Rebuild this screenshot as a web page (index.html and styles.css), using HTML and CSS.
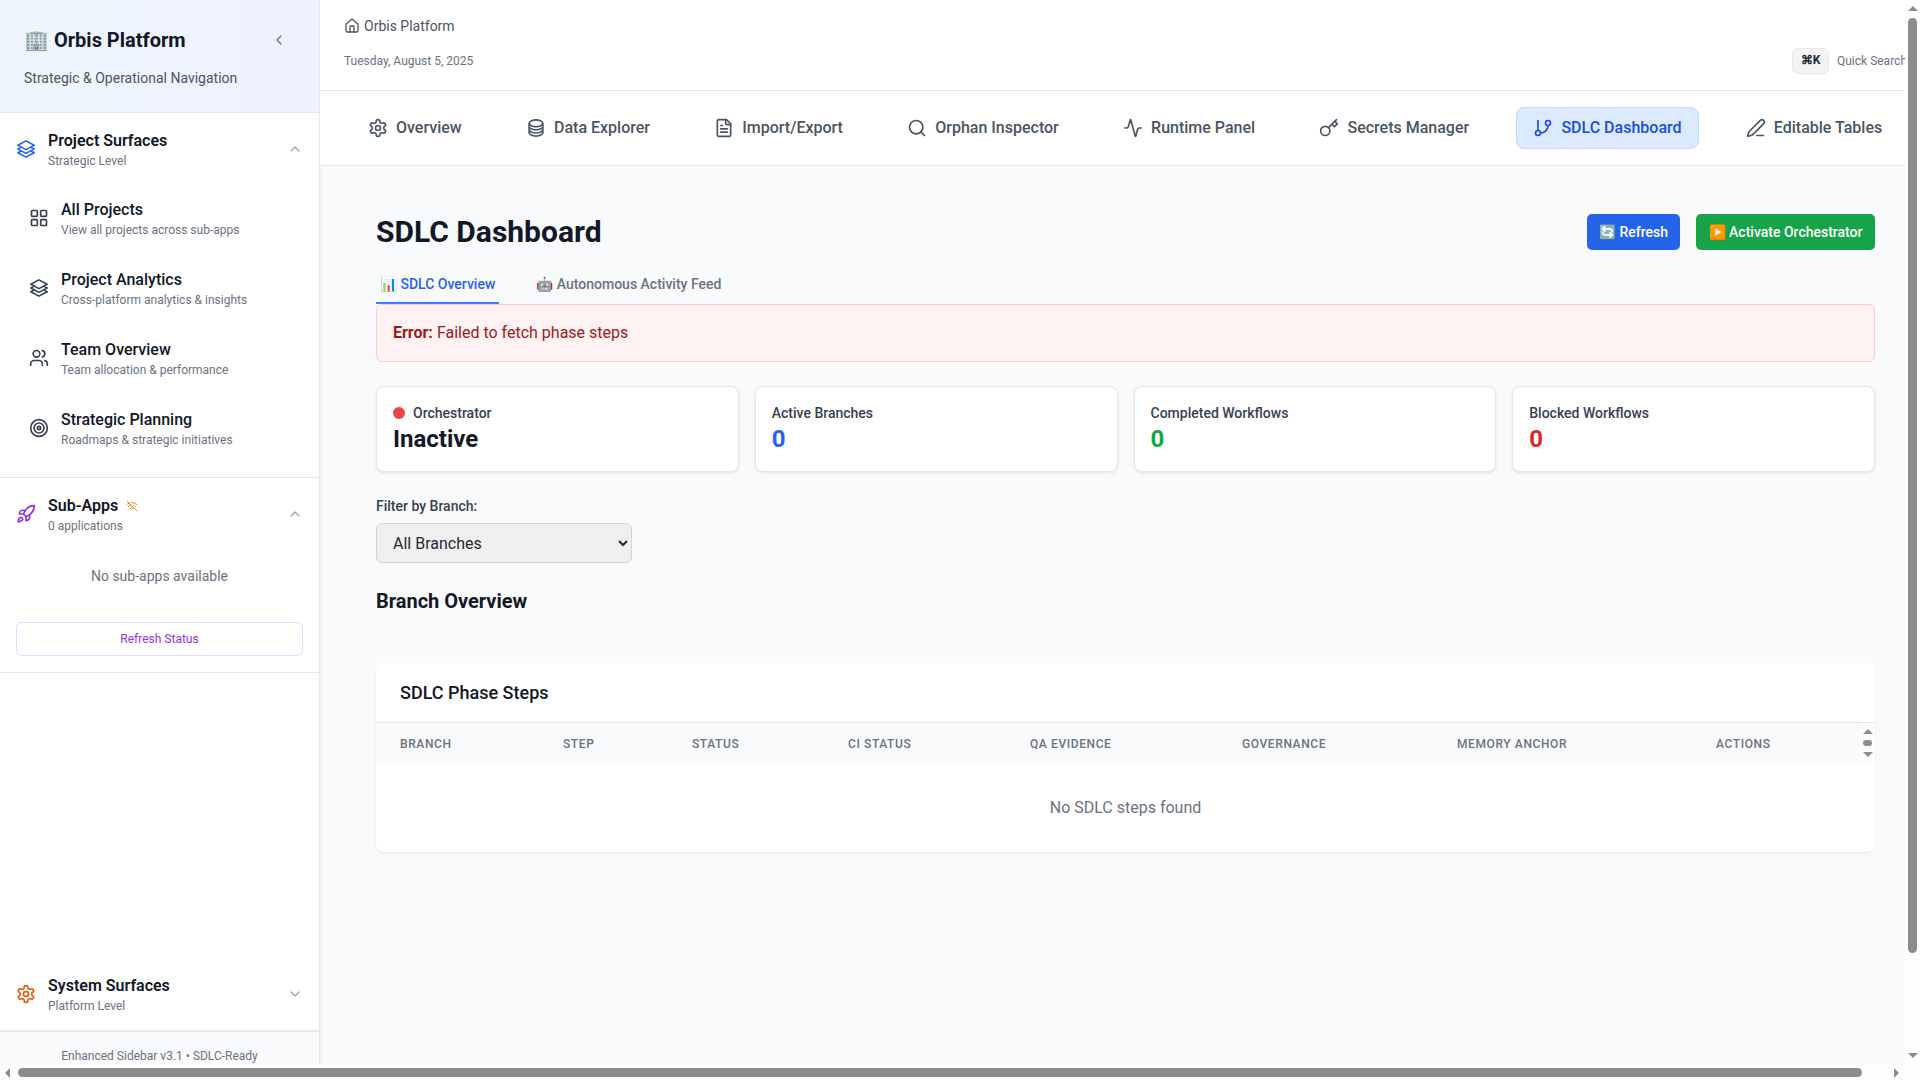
FILE: index.html
```html
<!DOCTYPE html>
<html lang="en">
<head>
  <meta charset="UTF-8">
  <meta name="viewport" content="width=device-width, initial-scale=1.0">
  <title>Orbis Platform - SDLC Dashboard</title>
  <link rel="stylesheet" href="styles.css">
</head>
<body>
  <aside class="sidebar">
    <div class="brand">
      <div class="brand-top">
        <h1 class="brand-title">🏢 Orbis Platform</h1>
        <svg class="icon collapse" viewBox="0 0 24 24" width="16" height="16"><path d="m15 18-6-6 6-6"/></svg>
      </div>
      <p class="brand-sub">Strategic &amp; Operational Navigation</p>
    </div>

    <section class="group group-projects">
      <div class="group-head">
        <svg class="icon blue" viewBox="0 0 24 24" width="20" height="20"><path d="M6.429 9.75 2.25 12l4.179 2.25m0-4.5 5.571 3 5.571-3m-11.142 0L2.25 7.5 12 2.25l9.75 5.25-4.179 2.25m0 0L21.75 12l-4.179 2.25m0 0 4.179 2.25L12 21.75 2.25 16.5l4.179-2.25m11.142 0-5.571 3-5.571-3"/></svg>
        <div class="group-text">
          <div class="group-title">Project Surfaces</div>
          <div class="group-sub">Strategic Level</div>
        </div>
        <svg class="icon chev" viewBox="0 0 24 24" width="16" height="16"><path d="m18 15-6-6-6 6"/></svg>
      </div>
      <a class="nav-item">
        <svg class="icon" viewBox="0 0 24 24" width="20" height="20"><rect x="3" y="3" width="7" height="7" rx="1"/><rect x="14" y="3" width="7" height="7" rx="1"/><rect x="14" y="14" width="7" height="7" rx="1"/><rect x="3" y="14" width="7" height="7" rx="1"/></svg>
        <div><div class="nav-title">All Projects</div><div class="nav-sub">View all projects across sub-apps</div></div>
      </a>
      <a class="nav-item">
        <svg class="icon" viewBox="0 0 24 24" width="20" height="20"><path d="M6.429 9.75 2.25 12l4.179 2.25m0-4.5 5.571 3 5.571-3m-11.142 0L2.25 7.5 12 2.25l9.75 5.25-4.179 2.25m0 0L21.75 12l-4.179 2.25m0 0 4.179 2.25L12 21.75 2.25 16.5l4.179-2.25m11.142 0-5.571 3-5.571-3"/></svg>
        <div><div class="nav-title">Project Analytics</div><div class="nav-sub">Cross-platform analytics &amp; insights</div></div>
      </a>
      <a class="nav-item">
        <svg class="icon" viewBox="0 0 24 24" width="20" height="20"><path d="M16 21v-2a4 4 0 0 0-4-4H6a4 4 0 0 0-4 4v2"/><circle cx="9" cy="7" r="4"/><path d="M22 21v-2a4 4 0 0 0-3-3.87"/><path d="M16 3.13a4 4 0 0 1 0 7.75"/></svg>
        <div><div class="nav-title">Team Overview</div><div class="nav-sub">Team allocation &amp; performance</div></div>
      </a>
      <a class="nav-item">
        <svg class="icon" viewBox="0 0 24 24" width="20" height="20"><circle cx="12" cy="12" r="10"/><circle cx="12" cy="12" r="6"/><circle cx="12" cy="12" r="2"/></svg>
        <div><div class="nav-title">Strategic Planning</div><div class="nav-sub">Roadmaps &amp; strategic initiatives</div></div>
      </a>
    </section>

    <section class="group group-apps">
      <div class="group-head">
        <svg class="icon purple" viewBox="0 0 24 24" width="20" height="20"><path d="M4.5 16.5c-1.5 1.26-2 5-2 5s3.74-.5 5-2c.71-.84.7-2.13-.09-2.91a2.18 2.18 0 0 0-2.91-.09z"/><path d="m12 15-3-3a22 22 0 0 1 2-3.95A12.88 12.88 0 0 1 22 2c0 2.72-.78 7.5-6 11a22.35 22.35 0 0 1-4 2z"/><path d="M9 12H4s.55-3.03 2-4c1.62-1.08 5 0 5 0"/><path d="M12 15v5s3.03-.55 4-2c1.08-1.62 0-5 0-5"/></svg>
        <div class="group-text">
          <div class="group-title">Sub-Apps
            <svg class="icon wifi" viewBox="0 0 24 24" width="12" height="12"><path d="M12 20h.01"/><path d="M8.5 16.429a5 5 0 0 1 7 0"/><path d="M5 12.859a10 10 0 0 1 5.17-2.69"/><path d="M19 12.859a10 10 0 0 0-2.007-1.523"/><path d="M2 8.82a15 15 0 0 1 4.177-2.643"/><path d="M22 8.82a15 15 0 0 0-11.288-3.764"/><path d="m2 2 20 20"/></svg>
          </div>
          <div class="group-sub">0 applications</div>
        </div>
        <svg class="icon chev" viewBox="0 0 24 24" width="16" height="16"><path d="m18 15-6-6-6 6"/></svg>
      </div>
      <p class="empty-apps">No sub-apps available</p>
      <button class="refresh-status">Refresh Status</button>
    </section>

    <section class="group group-system">
      <div class="group-head">
        <svg class="icon red-orange" viewBox="0 0 24 24" width="20" height="20"><path d="M12.22 2h-.44a2 2 0 0 0-2 2v.18a2 2 0 0 1-1 1.73l-.43.25a2 2 0 0 1-2 0l-.15-.08a2 2 0 0 0-2.73.73l-.22.38a2 2 0 0 0 .73 2.73l.15.1a2 2 0 0 1 1 1.72v.51a2 2 0 0 1-1 1.74l-.15.09a2 2 0 0 0-.73 2.73l.22.38a2 2 0 0 0 2.73.73l.15-.08a2 2 0 0 1 2 0l.43.25a2 2 0 0 1 1 1.73V20a2 2 0 0 0 2 2h.44a2 2 0 0 0 2-2v-.18a2 2 0 0 1 1-1.73l.43-.25a2 2 0 0 1 2 0l.15.08a2 2 0 0 0 2.73-.73l.22-.39a2 2 0 0 0-.73-2.73l-.15-.08a2 2 0 0 1-1-1.74v-.5a2 2 0 0 1 1-1.74l.15-.09a2 2 0 0 0 .73-2.73l-.22-.38a2 2 0 0 0-2.73-.73l-.15.08a2 2 0 0 1-2 0l-.43-.25a2 2 0 0 1-1-1.73V4a2 2 0 0 0-2-2z"/><circle cx="12" cy="12" r="3"/></svg>
        <div class="group-text">
          <div class="group-title">System Surfaces</div>
          <div class="group-sub">Platform Level</div>
        </div>
        <svg class="icon chev" viewBox="0 0 24 24" width="16" height="16"><path d="m6 9 6 6 6-6"/></svg>
      </div>
    </section>

    <footer class="side-footer">Enhanced Sidebar v3.1 • SDLC-Ready</footer>
  </aside>

  <div class="main">
    <header class="topbar">
      <div>
        <div class="crumb">
          <svg class="icon" viewBox="0 0 24 24" width="16" height="16"><path d="M15 21v-8a1 1 0 0 0-1-1h-4a1 1 0 0 0-1 1v8"/><path d="M3 10a2 2 0 0 1 .709-1.528l7-5.999a2 2 0 0 1 2.582 0l7 5.999A2 2 0 0 1 21 10v9a2 2 0 0 1-2 2H5a2 2 0 0 1-2-2z"/></svg>
          Orbis Platform
        </div>
        <div class="date">Tuesday, August 5, 2025</div>
      </div>
      <div class="search-hint"><kbd>⌘K</kbd><span>Quick Search</span></div>
    </header>

    <nav class="tabs">
      <a class="tab"><svg class="icon" viewBox="0 0 24 24" width="20" height="20"><path d="M12.22 2h-.44a2 2 0 0 0-2 2v.18a2 2 0 0 1-1 1.73l-.43.25a2 2 0 0 1-2 0l-.15-.08a2 2 0 0 0-2.73.73l-.22.38a2 2 0 0 0 .73 2.73l.15.1a2 2 0 0 1 1 1.72v.51a2 2 0 0 1-1 1.74l-.15.09a2 2 0 0 0-.73 2.73l.22.38a2 2 0 0 0 2.73.73l.15-.08a2 2 0 0 1 2 0l.43.25a2 2 0 0 1 1 1.73V20a2 2 0 0 0 2 2h.44a2 2 0 0 0 2-2v-.18a2 2 0 0 1 1-1.73l.43-.25a2 2 0 0 1 2 0l.15.08a2 2 0 0 0 2.73-.73l.22-.39a2 2 0 0 0-.73-2.73l-.15-.08a2 2 0 0 1-1-1.74v-.5a2 2 0 0 1 1-1.74l.15-.09a2 2 0 0 0 .73-2.73l-.22-.38a2 2 0 0 0-2.73-.73l-.15.08a2 2 0 0 1-2 0l-.43-.25a2 2 0 0 1-1-1.73V4a2 2 0 0 0-2-2z"/><circle cx="12" cy="12" r="3"/></svg>Overview</a>
      <a class="tab"><svg class="icon" viewBox="0 0 24 24" width="20" height="20"><path d="M20.25 6.375c0 2.278-3.694 4.125-8.25 4.125S3.75 8.653 3.75 6.375m16.5 0c0-2.278-3.694-4.125-8.25-4.125S3.75 4.097 3.75 6.375m16.5 0v11.25c0 2.278-3.694 4.125-8.25 4.125s-8.25-1.847-8.25-4.125V6.375m16.5 0v3.75m-16.5-3.75v3.75m16.5 0v3.75C20.25 16.153 16.556 18 12 18s-8.25-1.847-8.25-4.125v-3.75m16.5 0c0 2.278-3.694 4.125-8.25 4.125s-8.25-1.847-8.25-4.125"/></svg>Data Explorer</a>
      <a class="tab"><svg class="icon" viewBox="0 0 24 24" width="20" height="20"><path d="M15 2H6a2 2 0 0 0-2 2v16a2 2 0 0 0 2 2h12a2 2 0 0 0 2-2V7Z"/><path d="M14 2v4a2 2 0 0 0 2 2h4"/><path d="M10 9H8"/><path d="M16 13H8"/><path d="M16 17H8"/></svg>Import/Export</a>
      <a class="tab"><svg class="icon" viewBox="0 0 24 24" width="20" height="20"><circle cx="11" cy="11" r="8"/><path d="m21 21-4.3-4.3"/></svg>Orphan Inspector</a>
      <a class="tab"><svg class="icon" viewBox="0 0 24 24" width="20" height="20"><path d="M22 12h-2.48a2 2 0 0 0-1.93 1.46l-2.35 8.36a.25.25 0 0 1-.48 0L9.24 2.18a.25.25 0 0 0-.48 0l-2.35 8.36A2 2 0 0 1 4.49 12H2"/></svg>Runtime Panel</a>
      <a class="tab"><svg class="icon" viewBox="0 0 24 24" width="20" height="20"><path d="m15.5 7.5 3 3L22 7l-3-3"/><path d="m21 2-9.6 9.6"/><circle cx="7.5" cy="15.5" r="5.5"/></svg>Secrets Manager</a>
      <a class="tab tab-active"><svg class="icon" viewBox="0 0 24 24" width="20" height="20"><path d="M6 3v12"/><circle cx="18" cy="6" r="3"/><circle cx="6" cy="18" r="3"/><path d="M18 9a9 9 0 0 1-9 9"/></svg>SDLC Dashboard</a>
      <a class="tab"><svg class="icon" viewBox="0 0 24 24" width="20" height="20"><path d="M13 21h8"/><path d="M21.174 6.812a1 1 0 0 0-3.986-3.987L3.842 16.174a2 2 0 0 0-.5.83l-1.321 4.352a.5.5 0 0 0 .623.622l4.353-1.32a2 2 0 0 0 .83-.497z"/></svg>Editable Tables</a>
    </nav>

    <main class="content">
      <div class="page-head">
        <h2 class="page-title">SDLC Dashboard</h2>
        <div class="actions">
          <button class="btn btn-blue">🔄 Refresh</button>
          <button class="btn btn-green">▶️ Activate Orchestrator</button>
        </div>
      </div>

      <div class="subtabs">
        <a class="subtab subtab-active">📊 SDLC Overview</a>
        <a class="subtab">🤖 Autonomous Activity Feed</a>
      </div>

      <div class="error-box"><strong>Error:</strong> Failed to fetch phase steps</div>

      <div class="stats">
        <div class="stat">
          <div class="stat-label"><span class="dot"></span>Orchestrator</div>
          <div class="stat-value">Inactive</div>
        </div>
        <div class="stat">
          <div class="stat-label">Active Branches</div>
          <div class="stat-value val-blue">0</div>
        </div>
        <div class="stat">
          <div class="stat-label">Completed Workflows</div>
          <div class="stat-value val-green">0</div>
        </div>
        <div class="stat">
          <div class="stat-label">Blocked Workflows</div>
          <div class="stat-value val-red">0</div>
        </div>
      </div>

      <label class="filter-label" for="branch">Filter by Branch:</label>
      <select class="filter" id="branch">
        <option>All Branches</option>
      </select>

      <h3 class="section-title">Branch Overview</h3>

      <div class="steps-card">
        <h3 class="steps-title">SDLC Phase Steps</h3>
        <div class="steps-head">
          <div class="steps-cols">
            <span>Branch</span>
            <span>Step</span>
            <span>Status</span>
            <span>CI Status</span>
            <span>QA Evidence</span>
            <span>Governance</span>
            <span>Memory Anchor</span>
            <span>Actions</span>
          </div>
          <div class="mini-scroll">
            <span class="arrow arrow-up"></span>
            <span class="mini-thumb"></span>
            <span class="arrow arrow-down"></span>
          </div>
        </div>
        <div class="steps-empty">No SDLC steps found</div>
      </div>
    </main>
  </div>

  <!-- window scrollbars -->
  <div class="vbar">
    <span class="arrow arrow-up"></span>
    <span class="vthumb"></span>
    <span class="arrow arrow-down"></span>
  </div>
  <div class="hbar">
    <span class="arrow arrow-left"></span>
    <span class="hthumb"></span>
    <span class="arrow arrow-right"></span>
  </div>
</body>
</html>
```

FILE: styles.css
```css
html {
  overflow: hidden;
}

body {
  margin: 0;
  width: 1931px;
  height: 100vh;
  overflow: hidden;
  display: flex;
  align-items: flex-start;
  font-family: Roboto, "Noto Sans", sans-serif;
  background-color: #f9fafb;
  color: #111827;
}

.icon {
  fill: none;
  stroke: currentColor;
  stroke-width: 2;
  stroke-linecap: round;
  stroke-linejoin: round;
  flex-shrink: 0;
}

/* sidebar */
.sidebar {
  width: 320px;
  height: 100vh;
  box-sizing: border-box;
  flex-shrink: 0;
  display: flex;
  flex-direction: column;
  background-color: #fff;
  border-right: 1px solid #e5e7eb;
  box-shadow: 1px 0 3px rgba(0, 0, 0, 0.06);
}

.brand {
  height: 113px;
  box-sizing: border-box;
  padding: 24px 24px 0;
  background: linear-gradient(to right, #eff6ff, #eef2ff);
  border-bottom: 1px solid #e5e7eb;
}

.brand-top {
  display: flex;
  align-items: center;
  justify-content: space-between;
  height: 32px;
}

.brand-title {
  margin: 0;
  font-size: 20px;
  font-weight: 700;
}

.collapse {
  color: #6b7280;
  margin-right: 8px;
}

.brand-sub {
  margin: 12px 0 0;
  font-size: 14px;
  line-height: 20px;
  color: #4b5563;
}

.group {
  border-bottom: 1px solid #e5e7eb;
}

.group-projects {
  height: 365px;
  box-sizing: border-box;
}

.group-apps {
  height: 195px;
  box-sizing: border-box;
}

.group-system {
  margin-top: auto;
  height: 80px;
  box-sizing: border-box;
  padding-top: 22px;
  border-bottom-width: 2px;
}

.group-head {
  display: flex;
  align-items: center;
  padding: 16px 16px 0;
}

.group-system .group-head {
  padding-top: 0;
}

.group-head > .icon:first-child {
  margin-right: 12px;
}

.group-head .blue { color: #2563eb; }
.group-head .purple { color: #9333ea; }
.group-head .red-orange { color: #ea580c; }

.group-text {
  flex: 1;
}

.group-title {
  font-size: 16px;
  font-weight: 600;
  line-height: 24px;
  display: flex;
  align-items: center;
  gap: 8px;
}

.wifi {
  color: #ea8a1c;
}

.group-sub {
  font-size: 12px;
  line-height: 16px;
  color: #6b7280;
}

.chev {
  color: #9ca3af;
  margin-top: -1px;
}

.nav-item {
  display: flex;
  align-items: center;
  height: 70px;
  padding: 0 16px 0 29px;
  gap: 12px;
  color: #374151;
}

.group-head + .nav-item {
  margin-top: 14px;
}

.nav-title {
  font-size: 16px;
  font-weight: 500;
  line-height: 24px;
  color: #111827;
}

.nav-sub {
  font-size: 12px;
  line-height: 16px;
  color: #6b7280;
}

.empty-apps {
  margin: 32px 0 0;
  text-align: center;
  font-size: 14px;
  line-height: 20px;
  color: #6b7280;
}

.refresh-status {
  display: block;
  margin: 36px 16px 0;
  width: 287px;
  height: 34px;
  background-color: #fff;
  border: 1px solid #e9d5ff;
  border-radius: 6px;
  font-family: inherit;
  font-size: 12px;
  color: #9333ea;
}

.side-footer {
  height: 48px;
  box-sizing: border-box;
  padding-top: 14px;
  text-align: center;
  font-size: 12px;
  line-height: 20px;
  color: #6b7280;
  background-color: #f9fafb;
}

/* top of main */
.main {
  width: 1611px;
  flex-shrink: 0;
}

.topbar {
  height: 91px;
  box-sizing: border-box;
  padding: 16px 24px 0;
  display: flex;
  justify-content: space-between;
  background-color: #fff;
  border-bottom: 1px solid #e5e7eb;
}

.crumb {
  display: flex;
  align-items: center;
  gap: 4px;
  font-size: 14px;
  line-height: 20px;
  color: #4b5563;
}

.date {
  margin-top: 15px;
  font-size: 12px;
  line-height: 20px;
  color: #6b7280;
}

.search-hint {
  display: flex;
  align-items: center;
  align-self: flex-start;
  gap: 8px;
  margin-top: 32px;
  font-size: 12px;
  color: #6b7280;
  white-space: nowrap;
}

.search-hint kbd {
  box-sizing: border-box;
  width: 37px;
  height: 26px;
  line-height: 22px;
  text-align: center;
  font-family: inherit;
  font-size: 12px;
  font-weight: 700;
  color: #1f2937;
  background-color: #f3f4f6;
  border: 1px solid #e5e7eb;
  border-radius: 6px;
}

.tabs {
  display: flex;
  gap: 30.3px;
  height: 75px;
  box-sizing: border-box;
  padding: 16px 31px;
  background-color: #fff;
  border-bottom: 1px solid #e5e7eb;
}

.tab {
  display: flex;
  align-items: center;
  gap: 8px;
  padding: 0 16px 1px;
  border: 1px solid transparent;
  border-radius: 8px;
  font-size: 16px;
  font-weight: 500;
  color: #4b5563;
  white-space: nowrap;
}

.tab-active {
  color: #1d4ed8;
  background-color: #dbeafe;
  border-color: #bfdbfe;
}

/* dashboard */
.content {
  padding: 48px 56px 0;
}

.page-head {
  display: flex;
  align-items: center;
  justify-content: space-between;
  height: 36px;
}

.page-title {
  margin: -2px 0 0;
  font-size: 30px;
  font-weight: 700;
}

.actions {
  display: flex;
  gap: 16px;
}

.btn {
  height: 36px;
  padding: 0 12px;
  border: 0;
  border-radius: 5px;
  font-family: inherit;
  font-size: 14px;
  font-weight: 500;
  color: #fff;
}

.btn-blue { background-color: #2563eb; }
.btn-green { background-color: #16a34a; padding: 0 12.5px; }

.subtabs {
  display: flex;
  gap: 33px;
  margin-top: 11px;
}

.subtab {
  padding: 13px 4px 8px;
  font-size: 14px;
  line-height: 20px;
  font-weight: 500;
  color: #6b7280;
  border-bottom: 2px solid transparent;
}

.subtab-active {
  color: #2563eb;
  border-bottom-color: #3b82f6;
}

.error-box {
  box-sizing: border-box;
  height: 58px;
  padding: 0 16px 2px;
  display: flex;
  align-items: center;
  gap: 4px;
  font-size: 16px;
  color: #991b1b;
  background-color: #fef2f2;
  border: 1px solid #fecaca;
  border-radius: 6px;
}

.stats {
  display: grid;
  grid-template-columns: repeat(4, 1fr);
  gap: 16px;
  margin-top: 24px;
}

.stat {
  box-sizing: border-box;
  height: 86px;
  padding: 16px;
  background-color: #fff;
  border: 1px solid #e5e7eb;
  border-radius: 8px;
  box-shadow: 0 1px 3px rgba(0, 0, 0, 0.1);
}

.stat-label {
  display: flex;
  align-items: center;
  font-size: 14px;
  line-height: 20px;
  font-weight: 500;
  color: #374151;
}

.dot {
  width: 12px;
  height: 12px;
  margin-right: 8px;
  border-radius: 50%;
  background-color: #ef4444;
}

.stat-value {
  font-size: 24px;
  line-height: 32px;
  font-weight: 700;
}

.val-blue { color: #2563eb; }
.val-green { color: #16a34a; }
.val-red { color: #dc2626; }

.filter-label {
  display: block;
  margin-top: 24px;
  font-size: 14px;
  line-height: 20px;
  font-weight: 500;
  color: #374151;
}

.filter {
  display: block;
  box-sizing: border-box;
  width: 256px;
  height: 40px;
  margin-top: 7px;
  padding: 0 12px;
  font-family: inherit;
  font-size: 16px;
  color: #1f2937;
  background-color: #efefef;
  border: 1px solid #d1d5db;
  border-radius: 6px;
}

.section-title {
  margin: 24px 0 0;
  font-size: 20px;
  line-height: 28px;
  font-weight: 700;
}

.steps-card {
  margin-top: 48px;
  background-color: #fff;
  border-radius: 8px;
  box-shadow: 0 1px 2px rgba(0, 0, 0, 0.08);
}

.steps-title {
  margin: 0;
  height: 60px;
  box-sizing: border-box;
  padding: 0 24px;
  line-height: 60px;
  font-size: 18px;
  font-weight: 500;
  border-bottom: 1px solid #e5e7eb;
}

.steps-head {
  display: flex;
  height: 41px;
}

.steps-cols {
  flex: 1;
  display: grid;
  grid-template-columns: 163px 129px 156px 182px 212px 215px 259px 1fr;
  padding-left: 24px;
  align-items: center;
  background-color: #f9fafb;
  font-size: 12px;
  font-weight: 500;
  letter-spacing: 0.05em;
  text-transform: uppercase;
  color: #6b7280;
}

.steps-empty {
  height: 88px;
  line-height: 88px;
  text-align: center;
  font-size: 16px;
  color: #6b7280;
}

/* scrollbars */
.arrow {
  width: 0;
  height: 0;
  border: 5px solid transparent;
  flex-shrink: 0;
}

.arrow-up {
  border-top-width: 0;
  border-bottom-color: #8c8c8c;
}

.arrow-down {
  border-bottom-width: 0;
  border-top-color: #8c8c8c;
}

.arrow-left {
  border-left-width: 0;
  border-right-color: #8c8c8c;
}

.arrow-right {
  border-right-width: 0;
  border-left-color: #8c8c8c;
}

.mini-scroll {
  width: 15px;
  flex-shrink: 0;
  box-sizing: border-box;
  padding-top: 6px;
  display: flex;
  flex-direction: column;
  align-items: center;
  gap: 6px;
  background-color: #fdfdfd;
}

.mini-thumb {
  width: 9px;
  height: 6px;
  border-radius: 3px;
  background-color: #8c8c8c;
}

.vbar {
  position: fixed;
  top: 0;
  right: 0;
  width: 15px;
  height: 1065px;
  box-sizing: border-box;
  padding: 6px 0 7px;
  display: flex;
  flex-direction: column;
  align-items: center;
  background-color: #fefefe;
}

.vthumb {
  width: 9px;
  height: 935px;
  margin-top: 7px;
  border-radius: 5px;
  background-color: #8c8c8c;
}

.vbar .arrow-down {
  margin-top: auto;
}

.hbar {
  position: fixed;
  left: 0;
  bottom: 0;
  width: 100vw;
  height: 15px;
  box-sizing: border-box;
  padding: 0 21px 0 5px;
  display: flex;
  align-items: center;
  background-color: #fefefe;
}

.hthumb {
  width: 1844px;
  height: 9px;
  margin-left: 8px;
  border-radius: 5px;
  background-color: #8c8c8c;
}

.hbar .arrow-right {
  margin-left: auto;
}
```
